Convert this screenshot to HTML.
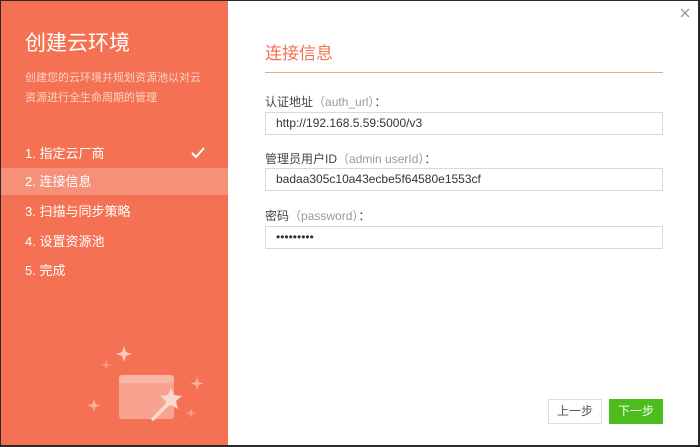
<!DOCTYPE html>
<html><head><meta charset="utf-8"><style>
*{margin:0;padding:0;box-sizing:border-box}
body{width:700px;height:447px;overflow:hidden;font-family:"Liberation Sans","Noto Sans CJK SC",sans-serif;background:#fff;position:relative}
.frame{position:absolute;left:0;top:0;width:700px;height:447px;border:1px solid #2a2a2a;border-right-width:2px;border-bottom-width:2px;z-index:5;pointer-events:none}
.side{position:absolute;left:0;top:0;width:228px;height:447px;background:#f47253;color:#fff}
.side h1{position:absolute;left:25px;top:27px;font-size:21px;font-weight:normal}
.side .desc{position:absolute;left:25px;top:68px;font-size:11px;line-height:20px;color:#fcd3c6;width:178px}
.step{position:absolute;left:0;width:228px;height:27px;line-height:27px;padding-left:25px;font-size:13px}
.step.act{background:#f69078}
.main h2{position:absolute;left:265px;top:39px;font-size:17px;font-weight:normal;color:#f47253}
.line{position:absolute;left:265px;top:72px;width:398px;height:1px;background:#f7a08c}
.lab{position:absolute;left:265px;font-size:12px;color:#444}
.lab span{color:#999}
.inp{position:absolute;left:265px;width:398px;height:23px;border:1px solid #d9d9d9;font-size:12px;line-height:21px;padding-left:10px;color:#333}
.btn{position:absolute;top:399px;height:25px;width:54px;font-size:12px;text-align:center;line-height:23px;border:1px solid #ddd;color:#555;background:#fff}
.btn.g{background:#4cbd1c;border-color:#4cbd1c;color:#fff}
</style></head><body>
<div class="frame"></div>
<div class="side">
<h1>创建云环境</h1>
<div class="desc">创建您的云环境并规划资源池以对云资源进行全生命周期的管理</div>
<div class="step" style="top:140px">1. 指定云厂商<svg style="position:absolute;left:191px;top:7px" width="14" height="12" viewBox="0 0 14 12"><path d="M1 6 L5 10 L13 1" fill="none" stroke="#fff" stroke-width="2"/></svg></div>
<div class="step act" style="top:168px">2. 连接信息</div>
<div class="step" style="top:198px">3. 扫描与同步策略</div>
<div class="step" style="top:228px">4. 设置资源池</div>
<div class="step" style="top:257px">5. 完成</div>
<svg style="position:absolute;left:80px;top:330px" width="150" height="117" viewBox="0 0 150 117">
<g fill="#fff">
<path d="M44 16 l2 6 6 2 -6 2 -2 6 -2 -6 -6 -2 6 -2z" opacity=".6"/>
<path d="M26 30 l1 4 4 1 -4 1 -1 4 -1 -4 -4 -1 4 -1z" opacity=".35"/>
<path d="M117 47 l1.5 5 5 1.5 -5 1.5 -1.5 5 -1.5 -5 -5 -1.5 5 -1.5z" opacity=".45"/>
<path d="M14 69 l1.5 5 5 1.5 -5 1.5 -1.5 5 -1.5 -5 -5 -1.5 5 -1.5z" opacity=".45"/>
<path d="M111 78 l1 4 4 1 -4 1 -1 4 -1 -4 -4 -1 4 -1z" opacity=".35"/>
<rect x="39" y="45" width="55" height="44" rx="3" opacity=".35"/>
<rect x="39" y="45" width="55" height="8" rx="3" opacity=".2"/>
<line x1="73" y1="89" x2="87" y2="75" stroke="#fcd9ce" stroke-width="3.5" stroke-linecap="round"/>
<path d="M91 58 l3 7 8 1 -6 5 2 8 -7 -4 -7 4 2 -8 -6 -5 8 -1z" fill="#fcd9ce"/>
</g></svg>
</div>
<div class="main">
<svg style="position:absolute;left:680px;top:8px" width="10" height="10" viewBox="0 0 10 10"><path d="M1 1 L9 9 M9 1 L1 9" stroke="#999" stroke-width="1.3"/></svg>
<h2>连接信息</h2>
<div class="line"></div>
<div class="lab" style="top:93px">认证地址<span>（auth_url）</span>：</div>
<div class="inp" style="top:112px">http://192.168.5.59:5000/v3</div>
<div class="lab" style="top:150px">管理员用户ID<span>（admin userId）</span>：</div>
<div class="inp" style="top:168px">badaa305c10a43ecbe5f64580e1553cf</div>
<div class="lab" style="top:207px">密码<span>（password）</span>：</div>
<div class="inp" style="top:226px">•••••••••</div>
<div class="btn" style="left:548px">上一步</div>
<div class="btn g" style="left:609px">下一步</div>
</div>
</body></html>
